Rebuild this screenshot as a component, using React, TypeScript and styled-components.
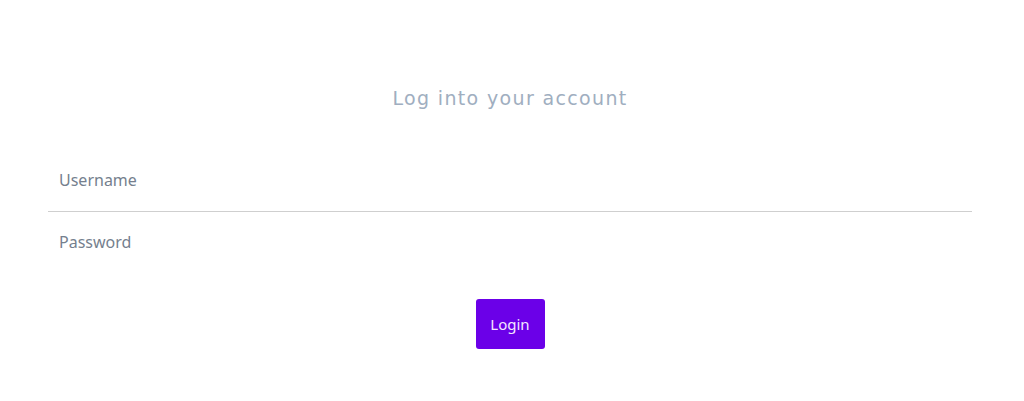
import styled, { createGlobalStyle } from "styled-components";

const GlobalStyle = createGlobalStyle`
  html, body {
    margin: 0;
    padding: 0;
    background: #ffffff;
    font-family: "Noto Sans", "Open Sans", sans-serif;
  }
`;

const TopBar = styled.div`
  height: 0;
  box-shadow: 0 0 6px rgba(0, 0, 0, 0.18);
`;

const Page = styled.main`
  padding: 84px 52px 0 48px;
  display: flex;
  flex-direction: column;
  align-items: stretch;
`;

const Title = styled.h1`
  margin: 0 0 38px;
  text-align: center;
  font-family: "DejaVu Sans", sans-serif;
  font-weight: 400;
  font-size: 19px;
  line-height: 28px;
  letter-spacing: 1.35px;
  color: #a0aec0;
`;

const Form = styled.form`
  display: flex;
  flex-direction: column;
  align-items: stretch;
`;

const Field = styled.input<{ $divider?: boolean }>`
  box-sizing: border-box;
  height: ${({ $divider }) => ($divider ? "62px" : "60px")};
  padding: ${({ $divider }) => ($divider ? "0 11px 1px" : "0 11px")};
  border: 0;
  border-bottom: ${({ $divider }) => ($divider ? "1px solid #cfcfcf" : "0")};
  outline: none;
  font-family: "Noto Sans", "Open Sans", sans-serif;
  font-size: 16px;
  color: #4a5568;
  background: transparent;

  &::placeholder {
    color: #757f8e;
  }
`;

const LoginButton = styled.button`
  align-self: center;
  margin-top: 27px;
  width: 69px;
  height: 50px;
  border: 0;
  border-radius: 3px;
  background: #6b00e8;
  color: #f3e8ff;
  font-family: "Noto Sans", "Open Sans", sans-serif;
  font-size: 15px;
  cursor: pointer;
`;

const App = () => {
  return (
    <>
      <GlobalStyle />
      <TopBar />
      <Page>
        <Title>Log into your account</Title>
        <Form onSubmit={(e) => e.preventDefault()}>
          <Field $divider type="text" placeholder="Username" />
          <Field type="password" placeholder="Password" />
          <LoginButton type="submit">Login</LoginButton>
        </Form>
      </Page>
    </>
  );
};

export default App;
